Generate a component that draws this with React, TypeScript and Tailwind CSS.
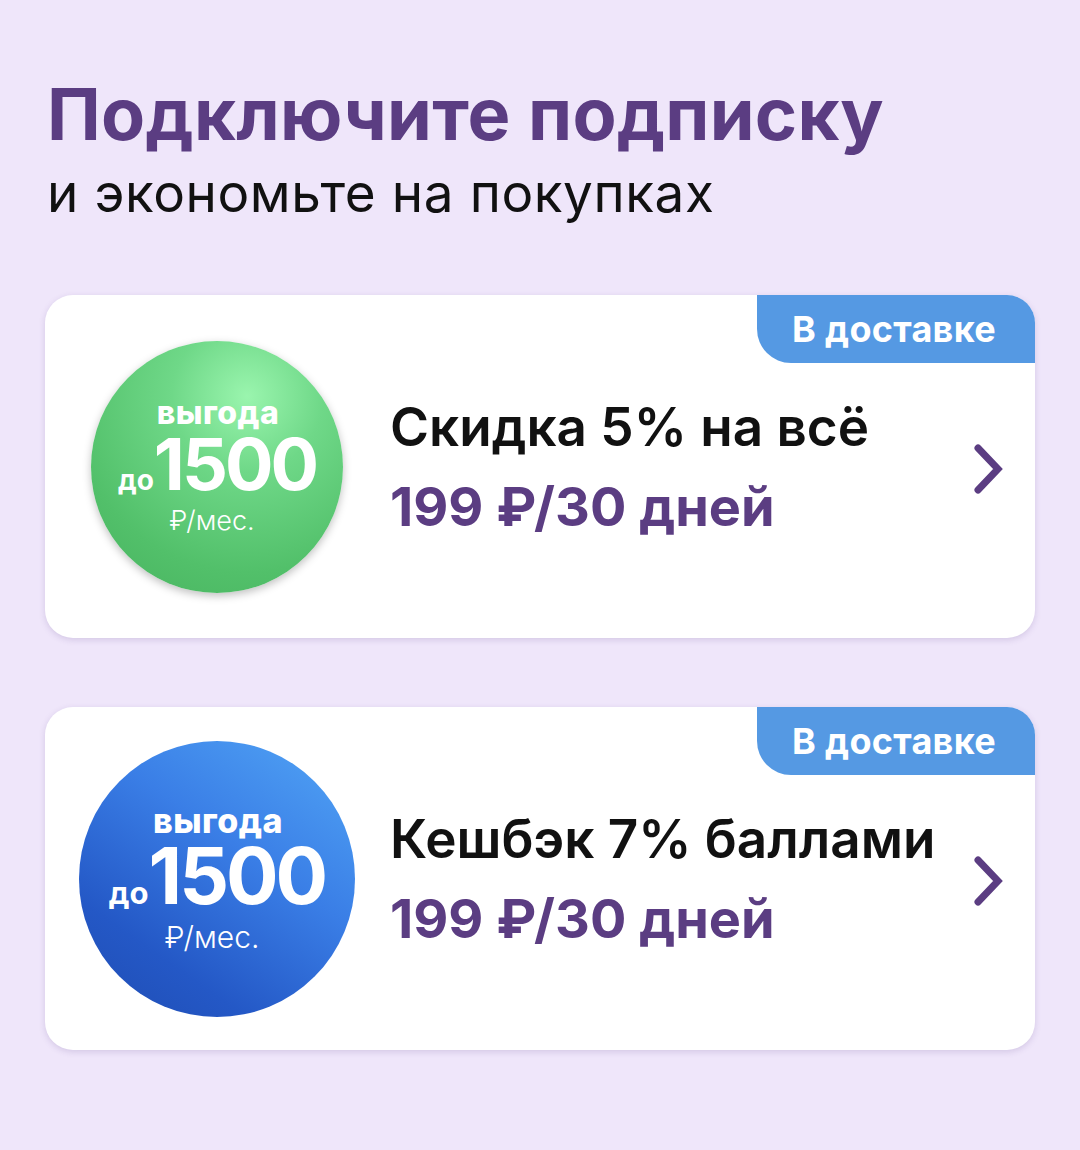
import React from 'react';

type Plan = {
  title: string;
  price: string;
  variant: 'green' | 'blue';
};

const PLANS: Plan[] = [
  { title: 'Скидка 5% на всё', price: '199 ₽/30 дней', variant: 'green' },
  { title: 'Кешбэк 7% баллами', price: '199 ₽/30 дней', variant: 'blue' },
];

const Badge: React.FC<{ variant: 'green' | 'blue' }> = ({ variant }) => {
  const green = variant === 'green';
  return (
    <div
      className={
        green
          ? 'w-[252px] h-[252px] rounded-full flex flex-col items-center justify-center text-white shadow-[0_3px_8px_rgba(0,0,0,0.25)] bg-[radial-gradient(circle_at_62%_22%,#9af5ae_0%,#6fd888_30%,#52c06a_70%,#47b25e_100%)]'
          : 'w-[276px] h-[276px] rounded-full flex flex-col items-center justify-center text-white bg-[linear-gradient(215deg,#52a6f6_0%,#3a7ee6_40%,#2458c6_75%,#1f4cb3_100%)]'
      }
    >
      <div className={green ? 'text-[32px] font-extrabold leading-[30px] tracking-[0.5px] pl-[2px]' : 'text-[34px] font-extrabold leading-[32px] tracking-[0.5px] pl-[2px]'}>
        выгода
      </div>
      <div className={green ? 'flex items-baseline mt-[7px]' : 'flex items-baseline mt-[8px]'}>
        <span className={green ? 'text-[28px] font-bold leading-[20px]' : 'text-[31px] font-bold leading-[22px]'}>до</span>
        <span className={green ? 'text-[72px] font-bold tracking-[-3px] leading-[58px]' : 'text-[78px] font-bold tracking-[-3px] leading-[62px]'}>1500</span>
      </div>
      <div className={green ? 'text-[27px] font-light leading-[30px] pr-[10px] mt-[13px]' : 'text-[30px] font-light leading-[32px] pr-[10px] mt-[14px]'}>
        ₽/мес.
      </div>
    </div>
  );
};

const Chevron: React.FC = () => (
  <svg width="36" height="56" viewBox="0 0 36 56" fill="none">
    <path d="M7 7 L27 28 L7 49" stroke="#5b3d82" strokeWidth="7" strokeLinecap="round" strokeLinejoin="miter" />
  </svg>
);

const PlanCard: React.FC<{ plan: Plan }> = ({ plan }) => {
  const green = plan.variant === 'green';
  return (
    <div className="relative bg-white rounded-[28px] h-[343px] shadow-[0_2px_6px_rgba(90,60,140,0.18)] flex items-center">
      <div className="absolute top-0 right-0 w-[278px] h-[68px] bg-[#5599e3] rounded-tr-[28px] rounded-bl-[34px] flex items-center justify-center pr-[4px]">
        <span className="text-white text-[36px] font-bold leading-none tracking-[0.3px]">В доставке</span>
      </div>
      <div className={green ? 'w-[345px] pl-[46px] flex-shrink-0' : 'w-[345px] pl-[34px] flex-shrink-0'}>
        <Badge variant={plan.variant} />
      </div>
      <div className="flex-1">
        <div className="text-[53px] font-semibold text-[#111] leading-[64px]">{plan.title}</div>
        <div className="text-[54px] font-bold text-[#5b3d82] leading-[64px] mt-[16px]">{plan.price}</div>
      </div>
      <div className="pr-[28px] pt-[4px]">
        <Chevron />
      </div>
    </div>
  );
};

const App: React.FC = () => {
  return (
    <div className="min-h-screen w-full bg-[#efe6fa] px-[45px] pt-[78px] pb-[100px] font-['Inter',sans-serif]">
      <h1 className="text-[72px] font-bold text-[#5b3d82] leading-none tracking-[0.3px] pl-[2px]">Подключите подписку</h1>
      <p className="text-[53px] text-[#111] leading-none mt-[17px] pl-[2px] tracking-[0.6px]">и экономьте на покупках</p>

      <div className="flex flex-col gap-[69px] mt-[75px]">
        {PLANS.map((p) => (
          <PlanCard key={p.title} plan={p} />
        ))}
      </div>
    </div>
  );
};

export default App;
